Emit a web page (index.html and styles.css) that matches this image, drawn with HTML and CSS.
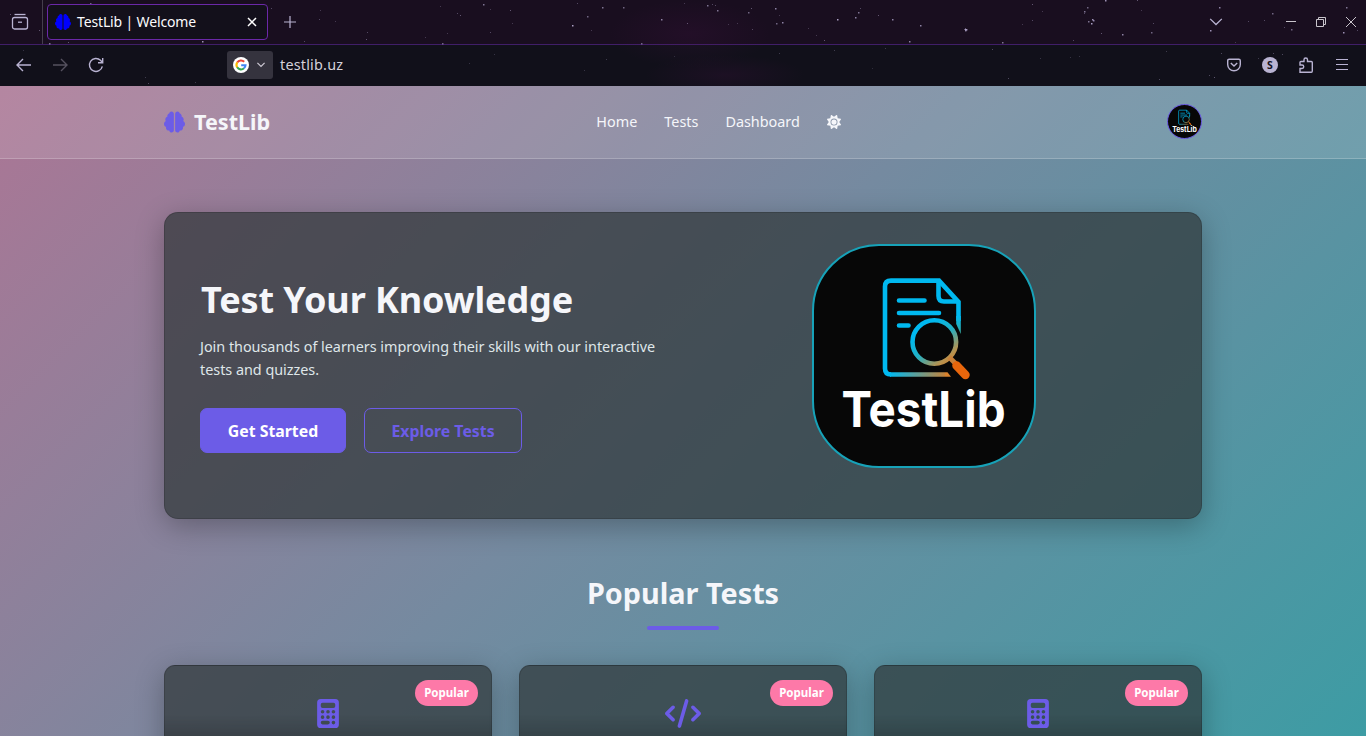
FILE: index.html
```html
<!DOCTYPE html>
<html lang="en">
<head>
<meta charset="utf-8">
<title>TestLib | Welcome</title>
<link rel="stylesheet" href="styles.css">
</head>
<body>
<svg class="defs" width="0" height="0" aria-hidden="true">
  <defs>
    <linearGradient id="ink" gradientUnits="userSpaceOnUse" x1="108" y1="84" x2="146" y2="130">
      <stop offset="0" stop-color="#00b9f0"/><stop offset=".3" stop-color="#22b0c4"/><stop offset=".62" stop-color="#b8924e"/><stop offset="1" stop-color="#e8660c"/>
    </linearGradient>
    <linearGradient id="sheet" gradientUnits="userSpaceOnUse" x1="76" y1="126" x2="140" y2="134">
      <stop offset="0" stop-color="#00b9f0"/><stop offset="1" stop-color="#e57a1c"/>
    </linearGradient>
    <linearGradient id="edge" gradientUnits="userSpaceOnUse" x1="0" y1="70" x2="0" y2="90">
      <stop offset="0" stop-color="#00b9f0"/><stop offset="1" stop-color="#3fa28f"/>
    </linearGradient>
    <symbol id="logo" viewBox="0 0 220 220">
      <g fill="none" stroke-width="4.6" stroke="#00b9f0">
        <path d="M144.500 75V56L125 34.600H77Q71 34.600 71 40.500V122.500Q71 128.500 77 128.500"/>
        <path d="M76 128.500H131" stroke="url(#sheet)"/>
        <path d="M144.500 55.500H130Q124.500 55.500 124.500 50V34.600"/>
        <path d="M85 54.500H110.500M85 67H125M85 79.500H94.500" stroke-linecap="round"/>
        <circle cx="120.300" cy="96" r="21.800" stroke="url(#ink)"/>
      </g>
      <path d="M142.200 70H146.800V88L142.200 78Z" fill="url(#edge)"/>
      <path d="M131 126.200H133.500L137 130.800H131Z" fill="#d9822c"/>
      <path d="M135 111L141.500 117.500" stroke="#c9813a" stroke-width="5"/>
      <path d="M142.500 119.500L151.500 129" stroke="#e8660c" stroke-width="8.500" stroke-linecap="round"/>
      <text x="27.500" y="181" textLength="164" lengthAdjust="spacingAndGlyphs" class="logo-word">TestLib</text>
    </symbol>
    <symbol id="brain" viewBox="0 0 512 512"><path fill="currentColor" d="M184 0c30.900 0 56 25.100 56 56V456c0 30.900-25.100 56-56 56c-28.900 0-52.700-21.900-55.700-50.100c-5.200 1.400-10.700 2.100-16.300 2.100c-35.300 0-64-28.700-64-64c0-7.400 1.300-14.600 3.600-21.200C21.400 367.400 0 338.200 0 304c0-31.900 18.700-59.500 45.800-72.300C37.100 220.800 32 207 32 192c0-30.700 21.600-56.300 50.400-62.600C80.800 123.900 80 118 80 112c0-29.900 20.600-55.100 48.300-62.100C131.300 21.900 155.100 0 184 0zM328 0c28.900 0 52.600 21.900 55.700 49.900c27.800 7 48.300 32.100 48.300 62.100c0 6-.8 11.900-2.400 17.400c28.800 6.200 50.400 31.900 50.400 62.600c0 15-5.100 28.800-13.800 39.700C493.300 244.500 512 272.100 512 304c0 34.200-21.400 63.400-51.600 74.800c2.300 6.600 3.600 13.800 3.600 21.200c0 35.300-28.700 64-64 64c-5.600 0-11.100-.7-16.300-2.100c-3 28.200-26.800 50.100-55.700 50.100c-30.900 0-56-25.100-56-56V56c0-30.900 25.100-56 56-56z"/></symbol>
    <symbol id="calc" viewBox="0 0 384 512"><path fill="currentColor" fill-rule="evenodd" d="M64 0H320a64 64 0 0 1 64 64V448a64 64 0 0 1-64 64H64a64 64 0 0 1-64-64V64A64 64 0 0 1 64 0zM96 64a32 32 0 0 0-32 32v32a32 32 0 0 0 32 32H288a32 32 0 0 0 32-32V96a32 32 0 0 0-32-32zM64 224a32 32 0 1 0 64 0a32 32 0 1 0-64 0zM160 224a32 32 0 1 0 64 0a32 32 0 1 0-64 0zM256 224a32 32 0 1 0 64 0a32 32 0 1 0-64 0zM64 320a32 32 0 1 0 64 0a32 32 0 1 0-64 0zM160 320a32 32 0 1 0 64 0a32 32 0 1 0-64 0zM256 320a32 32 0 1 0 64 0a32 32 0 1 0-64 0zM96 384a32 32 0 0 0 0 64h96a32 32 0 0 0 0-64zM256 416a32 32 0 1 0 64 0a32 32 0 1 0-64 0z"/></symbol>
  </defs>
</svg>

<div class="browser">
  <svg class="stars" width="1366" height="86" viewBox="0 0 1366 86" aria-hidden="true">
    <defs><radialGradient id="haze"><stop offset="0" stop-color="#4a124a" stop-opacity=".2"/><stop offset="1" stop-color="#4a124a" stop-opacity="0"/></radialGradient></defs>
    <ellipse cx="690" cy="34" rx="80" ry="34" fill="url(#haze)"/><ellipse cx="725" cy="75" rx="80" ry="20" fill="url(#haze)"/>
    <g id="sky"></g>
  </svg>
  <div class="tabbar">
    <div class="view">
      <svg width="18" height="18" viewBox="0 0 18 18" fill="none" stroke="#b9b3d2" stroke-width="1.300"><path d="M3.500 1.500H14.500"/><rect x="1.500" y="4.500" width="15" height="11.500" rx="2"/><path d="M7 9.200H11"/></svg>
    </div>
    <div class="tab">
      <svg class="favicon" width="16" height="16"><use href="#brain"/></svg>
      <span class="tab-title">TestLib | Welcome</span>
      <svg width="10" height="10" viewBox="0 0 10 10" stroke="#fff" stroke-width="1.500"><path d="M1 1L9 9M9 1L1 9"/></svg>
    </div>
    <svg class="plus" width="14" height="14" viewBox="0 0 14 14" stroke="#b9b3d2" stroke-width="1.200"><path d="M7 1V13M1 7H13"/></svg>
    <div class="window-tools">
      <svg width="14" height="8" viewBox="0 0 14 8" fill="none" stroke="#b9b3d2" stroke-width="1.300"><path d="M1.200 .9L7 6.500L12.800 .9"/></svg>
      <svg class="min" width="10" height="10" viewBox="0 0 10 10" stroke="#c9c5cc"><path d="M0 4.500H10"/></svg>
      <svg width="10" height="10" viewBox="0 0 10 10" fill="none" stroke="#c9c5cc"><path d="M.5 2.500H7.500V9.500H.5ZM2.500 2.500V.5H9.500V7.500H7.500"/></svg>
      <svg width="10" height="10" viewBox="0 0 10 10" stroke="#c9c5cc"><path d="M0 0L10 10M10 0L0 10"/></svg>
    </div>
  </div>
  <div class="toolbar">
    <div class="history">
      <svg width="16" height="14" viewBox="0 0 16 14" fill="none" stroke="#b9b3d2" stroke-width="1.400"><path d="M15 7H1.500M7 1L1 7L7 13"/></svg>
      <svg width="16" height="14" viewBox="0 0 16 14" fill="none" stroke="#55515f" stroke-width="1.400"><path d="M1 7H14.500M9 1L15 7L9 13"/></svg>
      <svg width="16" height="16" viewBox="0 0 16 16" fill="none" stroke="#b9b3d2" stroke-width="1.400"><path d="M14.300 9.300A6.500 6.500 0 1 1 12.500 3.300L14.500 5.500"/><path d="M14.700 1V5.800H10"/></svg>
    </div>
    <div class="engine">
      <svg width="16" height="16" viewBox="0 0 16 16"><circle cx="8" cy="8" r="8" fill="#fff"/><g fill="none" stroke-width="2.100"><path d="M4.200 5.500A4.500 4.500 0 0 1 11.200 4.800" stroke="#ea4335"/><path d="M4.300 10.500A4.500 4.500 0 0 1 4.300 5.400" stroke="#fbbc05"/><path d="M11 11.300A4.500 4.500 0 0 1 4.200 10.300" stroke="#34a853"/><path d="M8.200 8.200H12.500A4.500 4.500 0 0 1 11 11.300" stroke="#4285f4"/></g></svg>
      <svg width="8" height="6" viewBox="0 0 8 6" fill="none" stroke="#cfcbd6" stroke-width="1.200"><path d="M.4 .8L4 4.400L7.600 .8"/></svg>
    </div>
    <span class="url">testlib.uz</span>
    <div class="extras">
      <svg width="14" height="14" viewBox="0 0 14 14" fill="none" stroke="#b9b3d2" stroke-width="1.400"><path d="M2.200 1.200H11.800Q13.300 1.200 13.300 2.700V6.500A6.300 6.300 0 0 1 .7 6.500V2.700Q.7 1.200 2.200 1.200Z"/><path d="M3.800 4.900L7 8L10.200 4.900"/></svg>
      <span class="account">S</span>
      <svg width="14" height="16" viewBox="0 0 14 16" fill="none" stroke="#b9b3d2" stroke-width="1.400"><path d="M1 15V11.500H3A1.700 1.700 0 0 0 3 8H1V5.300Q1 4.500 2 4.500H5V2.700A1.700 1.700 0 0 1 8.500 2.700V4.500H12.300Q13.300 4.500 13.300 5.500V14Q13.300 15.200 12.300 15.200H1Z"/></svg>
      <svg width="12" height="11" viewBox="0 0 12 11" stroke="#b9b3d2" stroke-width="1.100"><path d="M0 .5H12M0 5.500H12M0 10.500H12"/></svg>
    </div>
  </div>
</div>

<div class="page">
  <header class="site-header">
    <div class="container header-row">
      <a class="brand"><svg width="21" height="22"><use href="#brain"/></svg><span>TestLib</span></a>
      <nav class="nav">
        <a>Home</a><a>Tests</a><a>Dashboard</a>
        <svg width="14" height="14" viewBox="0 0 512 512"><path fill="currentColor" d="M361.500 1.200c5 2.100 8.600 6.600 9.600 11.900L391 121l107.900 19.800c5.300 1 9.800 4.600 11.900 9.600s1.500 10.700-1.600 15.200L446.900 256l62.300 90.300c3.100 4.500 3.700 10.200 1.600 15.200s-6.600 8.600-11.900 9.600L391 391 371.100 498.900c-1 5.300-4.600 9.800-9.600 11.900s-10.700 1.500-15.200-1.600L256 446.900l-90.300 62.300c-4.500 3.100-10.200 3.700-15.200 1.600s-8.600-6.600-9.600-11.900L121 391 13.100 371.100c-5.300-1-9.800-4.600-11.900-9.600s-1.500-10.700 1.600-15.200L65.100 256 2.800 165.700c-3.100-4.500-3.700-10.200-1.600-15.200s6.600-8.600 11.900-9.600L121 121 140.900 13.100c1-5.300 4.600-9.800 9.600-11.900s10.700-1.500 15.200 1.600L256 65.100 346.300 2.800c4.500-3.100 10.200-3.700 15.200-1.600zM160 256a96 96 0 1 1 192 0 96 96 0 1 1-192 0zm224 0a128 128 0 1 0-256 0 128 128 0 1 0 256 0z"/></svg>
      </nav>
      <div class="avatar"><svg width="33" height="33"><use href="#logo"/></svg></div>
    </div>
  </header>

  <main class="container">
    <section class="hero">
      <div class="hero-copy">
        <h1>Test Your Knowledge</h1>
        <p>Join thousands of learners improving their skills with our interactive tests and quizzes.</p>
        <div class="actions"><a class="btn solid">Get Started</a><a class="btn outline">Explore Tests</a></div>
      </div>
      <div class="hero-art"><div class="hero-logo"><svg width="220" height="220"><use href="#logo"/></svg></div></div>
    </section>

    <h2 class="section-title">Popular Tests</h2>
    <div class="cards">
      <article class="card"><span class="badge">Popular</span><svg width="22" height="29"><use href="#calc"/></svg></article>
      <article class="card"><span class="badge">Popular</span><svg width="36" height="29" viewBox="0 0 640 512"><path fill="currentColor" d="M392.800 1.200c-17-4.900-34.700 5-39.600 22l-128 448c-4.900 17 5 34.700 22 39.600s34.700-5 39.600-22l128-448c4.900-17-5-34.700-22-39.600zm80.600 120.100c-12.500 12.500-12.500 32.800 0 45.300L562.700 256l-89.400 89.400c-12.500 12.500-12.500 32.800 0 45.300s32.800 12.500 45.300 0l112-112c12.500-12.500 12.500-32.800 0-45.300l-112-112c-12.500-12.500-32.800-12.500-45.300 0zm-306.700 0c-12.500-12.500-32.800-12.500-45.300 0l-112 112c-12.500 12.500-12.500 32.800 0 45.300l112 112c12.500 12.500 32.800 12.500 45.300 0s12.500-32.800 0-45.300L77.300 256l89.400-89.400c12.500-12.500 12.500-32.800 0-45.300z"/></svg></article>
      <article class="card"><span class="badge">Popular</span><svg width="22" height="29"><use href="#calc"/></svg></article>
    </div>
  </main>
</div>
<script src="stars.js"></script>
</body>
</html>
```
FILE: stars.js
```js
// x, y, opacity of each star behind the browser chrome
const stars = [
  [10,14,.5],[39,30,.5],[90,3,.6],[49,43,.7],[68,42,.5],[152,5,.3],[184,14,.4],[202,41,.9],[271,8,.4],[320,10,.3],[319,19,.4],[335,21,.3],[304,41,.4],[367,32,.4],[366,39,.5],[23,50,.25],[145,77,.3],[148,83,.4],[195,82,.3],
  [440,6,.3],[457,13,.4],[460,15,.5],[483,4,.7],[490,9,.3],[510,10,.5],[512,23,.3],[490,32,.4],[447,33,.3],[442,43,.6],[425,37,.3],[572,25,1],[577,3,.4],[587,16,.6],[602,7,.7],[623,7,.6],[591,30,.3],[661,19,.8],[687,23,.5],[641,43,.6],[707,5,.7],[717,10,.7],[712,4,.4],[715,5,.4],[684,3,.3],[728,24,.3],[737,23,.3],[748,12,.6],[751,8,.5],[752,29,.4],[775,8,.8],[776,23,.6],[782,22,.8],[779,15,.3],[808,28,.3],[816,35,.3],[824,40,.5],[837,19,1],[855,17,.8],[858,12,.7],[860,8,.4],[878,15,.5],[892,19,.8],[909,41,.8],[920,25,.8],[965,29,1],[966,29,.8],[965,30,.7],[965,28,.5],[964,29,.5],
  [494,54,.25],[606,59,.3],[584,70,.25],[469,63,.25],[674,56,.2],[779,53,.3],[834,50,.3],[885,48,.3],[992,49,.4],[872,68,.2],
  [1032,4,.5],[1042,11,.3],[1032,20,.4],[1022,24,.3],[1087,7,.6],[1084,11,.7],[1084,13,.4],[1088,21,.7],[1092,19,.9],[1091,23,1],[1093,20,.8],[1105,0,.9],[1137,0,.5],[1122,34,.8],[1101,33,.5],[1073,40,.4],[1002,42,.7],[1141,10,.3],[1151,32,.6],[1153,23,.4],[1219,7,.8],[1210,30,.9],[1248,21,.4],[1264,20,.4],[1272,13,.6],[1291,29,.6],[1284,27,.4],[1346,7,.7],[1343,32,.9],[1357,30,.4],[1235,42,.3],
  [1040,58,.25],[1070,57,.25],[1079,56,.25],[1008,78,.4],[1159,79,.4],[1166,51,.3],[1209,75,.4],[1214,77,.5],[1221,53,.4],[1273,53,.4],[1282,54,.4],[1258,58,.3]
];
const sky = document.getElementById('sky');
for (const [x, y, o] of stars) {
  const r = document.createElementNS('http://www.w3.org/2000/svg', 'rect');
  r.setAttribute('x', x);
  r.setAttribute('y', y);
  r.setAttribute('width', o > .5 ? 1.5 : 1);
  r.setAttribute('height', o > .5 ? 1.5 : 1);
  r.setAttribute('fill', '#cfc4ee');
  r.setAttribute('opacity', o * .8);
  sky.appendChild(r);
}
```
FILE: styles.css
```css
* { box-sizing: border-box; }
body { margin: 0; height: 736px; overflow: hidden; display: flex; flex-direction: column; font-family: "Noto Sans", "Open Sans", sans-serif; color: #f5f6fa; }
svg { display: block; flex: none; }
.defs { position: absolute; }

.browser { position: relative; height: 86px; flex: none; background: #190e1f; }
.stars { position: absolute; inset: 0; }
.tabbar { height: 45px; display: flex; align-items: center; border-bottom: 1px solid #401e68; }
.view { width: 43px; height: 44px; padding-left: 11px; display: flex; align-items: center; border-right: 1px solid #453e4d; }
.tab { position: relative; width: 221px; height: 36px; margin-left: 4px; padding: 0 10px 0 7px; display: flex; align-items: center; border: 1px solid #6b28a8; border-radius: 4px; background: #13101b; }
.favicon { color: #0000fe; }
.tab-title { flex: 1; margin-left: 6px; padding-bottom: 2px; font-size: 14px; letter-spacing: -.14px; white-space: nowrap; color: #fbfbfe; }
.plus { margin-left: 15px; }
.window-tools { margin-left: auto; padding-right: 10px; display: flex; align-items: center; gap: 20px; }
.min { margin-left: 43px; }
.toolbar { height: 41px; padding-bottom: 2px; display: flex; align-items: center; background: rgba(16, 17, 26, .82); }
.history { width: 227px; padding-left: 16px; display: flex; align-items: center; gap: 20px; }
.engine { width: 46px; height: 28px; padding: 0 8px 0 6px; display: flex; align-items: center; justify-content: space-between; border-radius: 3px; background: #35333e; }
.url { margin-left: 7px; font-size: 14.400px; letter-spacing: .2px; color: #d5d2da; }
.extras { margin-left: auto; padding-right: 18px; display: flex; align-items: center; gap: 21px; }
.extras svg:last-child { margin-left: 2px; }
.account { width: 16px; height: 16px; border-radius: 50%; background: #b9b3d2; color: #14111c; font: bold 10.500px/16px "Noto Sans", sans-serif; text-align: center; }

.page { flex: 1; min-height: 0; overflow: hidden; background: linear-gradient(135deg, #ab7695 0%, #758aa0 48%, #3d9ca4 100%); }
.container { width: 1038px; margin: 0 auto; }
.site-header { height: 73px; background: rgba(245, 246, 250, .13); border-bottom: 1px solid rgba(255, 255, 255, .2); }
.header-row { height: 72px; padding-bottom: 1px; display: flex; justify-content: space-between; align-items: center; }
.brand { display: flex; align-items: center; gap: 9px; font-size: 21.600px; font-weight: 700; }
.brand svg { color: #6c5ce7; }
.nav { display: flex; align-items: center; gap: 27px; font-size: 14.400px; }
.avatar { width: 35px; height: 35px; border: 1px solid #6c5ce7; border-radius: 50%; background: #070707; overflow: hidden; }
.logo-word { font: bold 50px Inter, "Liberation Sans", sans-serif; fill: #fff; }

.hero { height: 307px; margin-top: 53px; padding: 0 36px; display: grid; grid-template-columns: 1fr 1fr; border: 1px solid rgba(0, 0, 0, .15); border-radius: 14px; background: rgba(45, 52, 54, .7); box-shadow: 0 7px 29px rgba(0, 0, 0, .28); }
.hero-copy { padding: 64px 0 0; margin-left: -1px; }
.hero h1 { margin: 0; padding-left: 1px; font-size: 36px; line-height: 46px; font-weight: 700; letter-spacing: -.1px; }
.hero p { width: 468px; margin: 12px 0 27px; font-size: 14.400px; line-height: 23px; letter-spacing: -.02px; color: #dfe6e9; }
.actions { display: flex; gap: 18px; }
.btn { height: 45px; display: flex; align-items: center; justify-content: center; border: 1px solid #6c5ce7; border-radius: 7px; font-size: 15.840px; font-weight: 700; }
.solid { width: 146px; background: #6c5ce7; color: #fff; }
.outline { width: 158px; color: #6c5ce7; }
.hero-art { padding: 31px 0 0 129px; }
.hero-logo { width: 224px; height: 224px; overflow: hidden; border: 2px solid #17a2b8; border-radius: 67px; background: #070707; }

.section-title { margin: 52px 0 35px; font-size: 28.800px; line-height: 43px; font-weight: 700; text-align: center; }
.section-title::after { content: ""; display: block; width: 72px; height: 4px; margin: 12px auto 0; border-radius: 2px; background: #6c5ce7; }
.cards { display: grid; grid-template-columns: repeat(3, 328px); gap: 27px; }
.card { position: relative; height: 220px; padding-top: 33px; display: flex; justify-content: center; align-items: flex-start; border: 1px solid rgba(0, 0, 0, .15); border-radius: 11px; color: #6c5ce7; background: linear-gradient(rgba(0, 0, 0, 0) 48px, rgba(0, 0, 0, .16) 72px), rgba(45, 52, 54, .7); box-shadow: 0 7px 29px rgba(0, 0, 0, .28); }
.badge { position: absolute; top: 14px; right: 13px; width: 63px; height: 26px; border-radius: 13px; background: #fd79a8; color: #fff; font-size: 11.520px; line-height: 25px; font-weight: 700; text-align: center; }
```
